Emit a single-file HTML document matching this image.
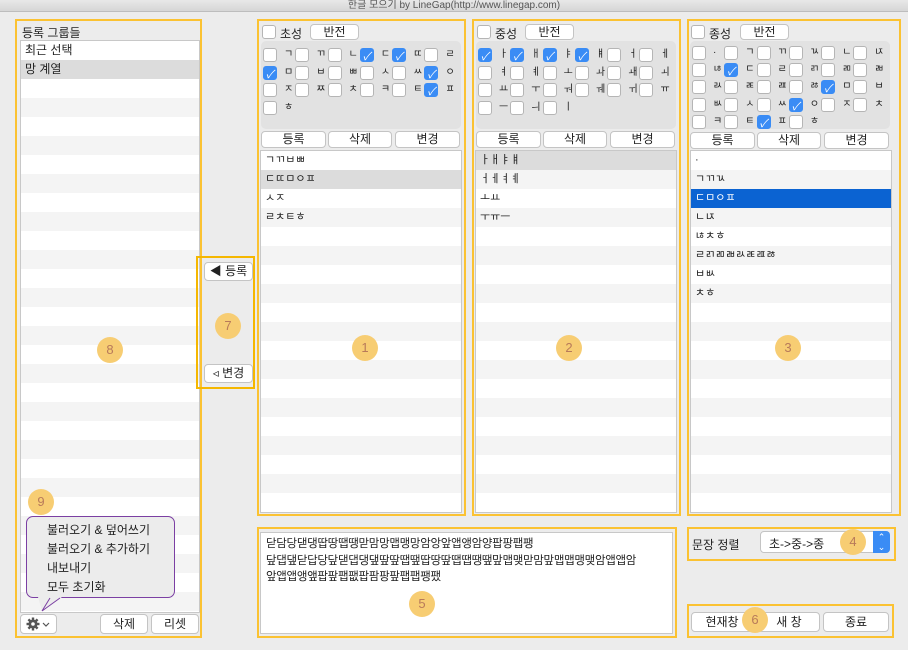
<!DOCTYPE html><html><head><meta charset="utf-8"><style>
*{box-sizing:border-box;margin:0;padding:0}
body{width:908px;height:650px;background:#ececec;font-family:"Liberation Sans","Noto Sans CJK KR",sans-serif;font-size:12px;color:#222;position:relative;overflow:hidden}
.a{position:absolute}
.tb{left:0;top:0;width:908px;height:12px;background:linear-gradient(#e8e8e8,#d6d6d6);border-bottom:1px solid #bdbdbd;font-size:10px;color:#555;text-align:center;line-height:11px}
.ob{position:absolute;border:2px solid #fbc232}
.list{position:absolute;background:repeating-linear-gradient(#fff 0 19px,#f4f4f4 19px 38px);border:1px solid #c8c8c8}
.row{height:19px;line-height:19px;padding-left:4px;font-size:11px}
.btn{position:absolute;background:#fff;border:1px solid #c4c4c4;border-radius:4px;text-align:center;font-size:12px;line-height:15px;height:17px}
.cb{position:absolute;width:14px;height:14px;border:1px solid #b5b5b5;border-radius:3px;background:#fff}
.grid{position:absolute;background:#e2e2e2;border-radius:5px;display:grid;grid-template-columns:repeat(6,32.3px);grid-auto-rows:17.6px;padding:7px 0 0 2px}
.cell{position:relative;font-size:10px}
.cell i{position:absolute;left:0;top:0;width:14px;height:14px;border:1px solid #b5b5b5;border-radius:3px;background:#fff}
.cell i.k{background:#3a8cf5;border-color:#3a8cf5}
.cell i.k:after{content:"✓";color:#fff;position:absolute;left:2px;top:-1px;font-size:11px}
.cell b{position:absolute;left:21px;top:0;font-weight:normal;line-height:14px}
.circ{position:absolute;width:26px;height:26px;border-radius:50%;background:#f7cd73;color:#b87a5a;text-align:center;line-height:26px;font-size:13px}
.hd{font-size:12px}
</style></head><body>
<div class="a tb">한글 모으기 by LineGap(http://www.linegap.com)</div>

<div class="ob" style="left:15px;top:19px;width:187px;height:619px"></div>
<div class="a" style="left:22px;top:24px;font-size:12px">등록 그룹들</div>
<div class="list" style="left:20px;top:40px;width:180px;height:573px">
<div class="row" style="font-size:12px">최근 선택</div>
<div class="row" style="background:#dcdcdc;font-size:12px">망 계열</div>
</div>
<div class="btn" style="left:20px;top:614px;width:37px;height:20px"></div>
<svg class="a" style="left:26px;top:617px" width="28" height="14"><g fill="#555" transform="translate(7,7)"><circle r="4.5"/><g stroke="#555" stroke-width="2.4"><line x1="0" y1="-6.5" x2="0" y2="6.5"/><line x1="-6.5" y1="0" x2="6.5" y2="0"/><line x1="-4.6" y1="-4.6" x2="4.6" y2="4.6"/><line x1="-4.6" y1="4.6" x2="4.6" y2="-4.6"/></g><circle r="1.8" fill="#fff"/></g><path d="M17 6 L20 9 L23 6" stroke="#555" fill="none" stroke-width="1.2"/></svg>
<div class="btn" style="left:100px;top:614px;width:48px;height:20px;line-height:18px">삭제</div>
<div class="btn" style="left:151px;top:614px;width:48px;height:20px;line-height:18px">리셋</div>
<div class="circ" style="left:97px;top:337px">8</div>
<div class="circ" style="left:28px;top:489px">9</div>
<div class="a" style="left:26px;top:516px;width:149px;height:82px;border:1px solid #7b3fa3;border-radius:7px;background:#ececec;padding:4px 0 0 20px;line-height:19px;font-size:12px">불러오기 &amp; 덮어쓰기<br>불러오기 &amp; 추가하기<br>내보내기<br>모두 초기화</div>
<svg class="a" style="left:38px;top:596px" width="30" height="18"><path d="M0 1 L24 1 L4 15 Z" fill="#ececec"/><path d="M4 15 L22 2 M4 15 L12 2" stroke="#7b3fa3" fill="none"/></svg>

<div class="ob" style="left:196px;top:256px;width:59px;height:133px;border-color:#f5b700"></div>
<div class="btn" style="left:204px;top:262px;width:49px;height:19px;line-height:17px">◀ 등록</div>
<div class="btn" style="left:204px;top:364px;width:49px;height:19px;line-height:17px">◃ 변경</div>
<div class="circ" style="left:215px;top:313px">7</div>

<div class="ob" style="left:257px;top:19px;width:209px;height:497px"></div>
<div class="cb" style="left:262px;top:25px"></div><div class="a hd" style="left:280px;top:25px">초성</div>
<div class="btn" style="left:310px;top:24px;width:49px;height:16px;line-height:14px">반전</div>
<div class="grid" style="left:261px;top:41px;width:200px;height:88px">
<div class="cell"><i></i><b>ㄱ</b></div><div class="cell"><i></i><b>ㄲ</b></div><div class="cell"><i></i><b>ㄴ</b></div><div class="cell"><i class="k"></i><b>ㄷ</b></div><div class="cell"><i class="k"></i><b>ㄸ</b></div><div class="cell"><i></i><b>ㄹ</b></div>
<div class="cell"><i class="k"></i><b>ㅁ</b></div><div class="cell"><i></i><b>ㅂ</b></div><div class="cell"><i></i><b>ㅃ</b></div><div class="cell"><i></i><b>ㅅ</b></div><div class="cell"><i></i><b>ㅆ</b></div><div class="cell"><i class="k"></i><b>ㅇ</b></div>
<div class="cell"><i></i><b>ㅈ</b></div><div class="cell"><i></i><b>ㅉ</b></div><div class="cell"><i></i><b>ㅊ</b></div><div class="cell"><i></i><b>ㅋ</b></div><div class="cell"><i></i><b>ㅌ</b></div><div class="cell"><i class="k"></i><b>ㅍ</b></div>
<div class="cell"><i></i><b>ㅎ</b></div>
</div>
<div class="btn" style="left:261px;top:131px;width:65px">등록</div>
<div class="btn" style="left:328px;top:131px;width:64px">삭제</div>
<div class="btn" style="left:395px;top:131px;width:65px">변경</div>
<div class="list" style="left:260px;top:150px;width:202px;height:363px">
<div class="row">ㄱㄲㅂㅃ</div><div class="row" style="background:#dcdcdc">ㄷㄸㅁㅇㅍ</div><div class="row">ㅅㅈ</div><div class="row">ㄹㅊㅌㅎ</div>
</div>
<div class="circ" style="left:352px;top:335px">1</div>

<div class="ob" style="left:472px;top:19px;width:209px;height:497px"></div>
<div class="cb" style="left:477px;top:25px"></div><div class="a hd" style="left:495px;top:25px">중성</div>
<div class="btn" style="left:525px;top:24px;width:49px;height:16px;line-height:14px">반전</div>
<div class="grid" style="left:476px;top:41px;width:200px;height:88px">
<div class="cell"><i class="k"></i><b>ㅏ</b></div><div class="cell"><i class="k"></i><b>ㅐ</b></div><div class="cell"><i class="k"></i><b>ㅑ</b></div><div class="cell"><i class="k"></i><b>ㅒ</b></div><div class="cell"><i></i><b>ㅓ</b></div><div class="cell"><i></i><b>ㅔ</b></div>
<div class="cell"><i></i><b>ㅕ</b></div><div class="cell"><i></i><b>ㅖ</b></div><div class="cell"><i></i><b>ㅗ</b></div><div class="cell"><i></i><b>ㅘ</b></div><div class="cell"><i></i><b>ㅙ</b></div><div class="cell"><i></i><b>ㅚ</b></div>
<div class="cell"><i></i><b>ㅛ</b></div><div class="cell"><i></i><b>ㅜ</b></div><div class="cell"><i></i><b>ㅝ</b></div><div class="cell"><i></i><b>ㅞ</b></div><div class="cell"><i></i><b>ㅟ</b></div><div class="cell"><i></i><b>ㅠ</b></div>
<div class="cell"><i></i><b>ㅡ</b></div><div class="cell"><i></i><b>ㅢ</b></div><div class="cell"><i></i><b>ㅣ</b></div>
</div>
<div class="btn" style="left:476px;top:131px;width:65px">등록</div>
<div class="btn" style="left:543px;top:131px;width:64px">삭제</div>
<div class="btn" style="left:610px;top:131px;width:65px">변경</div>
<div class="list" style="left:475px;top:150px;width:202px;height:363px">
<div class="row" style="background:#dcdcdc">ㅏㅐㅑㅒ</div><div class="row">ㅓㅔㅕㅖ</div><div class="row">ㅗㅛ</div><div class="row">ㅜㅠㅡ</div>
</div>
<div class="circ" style="left:556px;top:335px">2</div>

<div class="ob" style="left:687px;top:19px;width:214px;height:497px"></div>
<div class="cb" style="left:691px;top:25px"></div><div class="a hd" style="left:709px;top:25px">종성</div>
<div class="btn" style="left:740px;top:24px;width:49px;height:16px;line-height:14px">반전</div>
<div class="grid" style="left:690px;top:41px;width:200px;height:88px;grid-auto-rows:17.2px;padding-top:5px">
<div class="cell"><i></i><b>·</b></div><div class="cell"><i></i><b>ㄱ</b></div><div class="cell"><i></i><b>ㄲ</b></div><div class="cell"><i></i><b>ㄳ</b></div><div class="cell"><i></i><b>ㄴ</b></div><div class="cell"><i></i><b>ㄵ</b></div>
<div class="cell"><i></i><b>ㄶ</b></div><div class="cell"><i class="k"></i><b>ㄷ</b></div><div class="cell"><i></i><b>ㄹ</b></div><div class="cell"><i></i><b>ㄺ</b></div><div class="cell"><i></i><b>ㄻ</b></div><div class="cell"><i></i><b>ㄼ</b></div>
<div class="cell"><i></i><b>ㄽ</b></div><div class="cell"><i></i><b>ㄾ</b></div><div class="cell"><i></i><b>ㄿ</b></div><div class="cell"><i></i><b>ㅀ</b></div><div class="cell"><i class="k"></i><b>ㅁ</b></div><div class="cell"><i></i><b>ㅂ</b></div>
<div class="cell"><i></i><b>ㅄ</b></div><div class="cell"><i></i><b>ㅅ</b></div><div class="cell"><i></i><b>ㅆ</b></div><div class="cell"><i class="k"></i><b>ㅇ</b></div><div class="cell"><i></i><b>ㅈ</b></div><div class="cell"><i></i><b>ㅊ</b></div>
<div class="cell"><i></i><b>ㅋ</b></div><div class="cell"><i></i><b>ㅌ</b></div><div class="cell"><i class="k"></i><b>ㅍ</b></div><div class="cell"><i></i><b>ㅎ</b></div>
</div>
<div class="btn" style="left:690px;top:132px;width:65px">등록</div>
<div class="btn" style="left:757px;top:132px;width:64px">삭제</div>
<div class="btn" style="left:824px;top:132px;width:65px">변경</div>
<div class="list" style="left:690px;top:150px;width:202px;height:363px">
<div class="row">·</div><div class="row">ㄱㄲㄳ</div><div class="row" style="background:#0b63d2;color:#fff">ㄷㅁㅇㅍ</div><div class="row">ㄴㄵ</div><div class="row">ㄶㅊㅎ</div><div class="row">ㄹㄺㄻㄼㄽㄾㄿㅀ</div><div class="row">ㅂㅄ</div><div class="row">ㅊㅎ</div>
</div>
<div class="circ" style="left:775px;top:335px">3</div>

<div class="ob" style="left:257px;top:527px;width:420px;height:111px"></div>
<div class="a" style="left:260px;top:532px;width:413px;height:102px;background:#fff;border:1px solid #c8c8c8;padding:3px 0 0 5px;font-size:11.5px;line-height:16.5px;letter-spacing:-0.3px">닫담당댇댕땁땅땝땡맏맘망맵맹망암앙앞앱앵암양팝팡팹팽<br>닾댑댚닫답당닾댇댑댕댚땊땊땝땦땁땅땊땝땝땡땦맢맵맺맏맘맢맵맵맹맺암앱앱암<br>앞앱앱앵앺팝팦팹팺팝팜팡팦팹팹팽팼</div>
<div class="circ" style="left:409px;top:591px">5</div>

<div class="ob" style="left:687px;top:527px;width:209px;height:34px"></div>
<div class="a" style="left:692px;top:536px;font-size:12px">문장 정렬</div>
<div class="a" style="left:760px;top:531px;width:130px;height:22px;background:#fff;border:1px solid #c4c4c4;border-radius:4px;padding:3px 0 0 8px;font-size:12px">초-&gt;중-&gt;종</div>
<div class="a" style="left:873px;top:531px;width:17px;height:22px;background:#3a8cf5;border-radius:0 4px 4px 0;color:#fff;font-size:9px;text-align:center;line-height:10px;padding-top:1px">⌃<br>⌄</div>
<div class="circ" style="left:840px;top:529px">4</div>

<div class="ob" style="left:687px;top:604px;width:207px;height:34px"></div>
<div class="btn" style="left:691px;top:612px;width:62px;height:20px;line-height:18px">현재창</div>
<div class="btn" style="left:758px;top:612px;width:62px;height:20px;line-height:18px">새 창</div>
<div class="btn" style="left:823px;top:612px;width:66px;height:20px;line-height:18px">종료</div>
<div class="circ" style="left:742px;top:607px">6</div>
</body></html>
